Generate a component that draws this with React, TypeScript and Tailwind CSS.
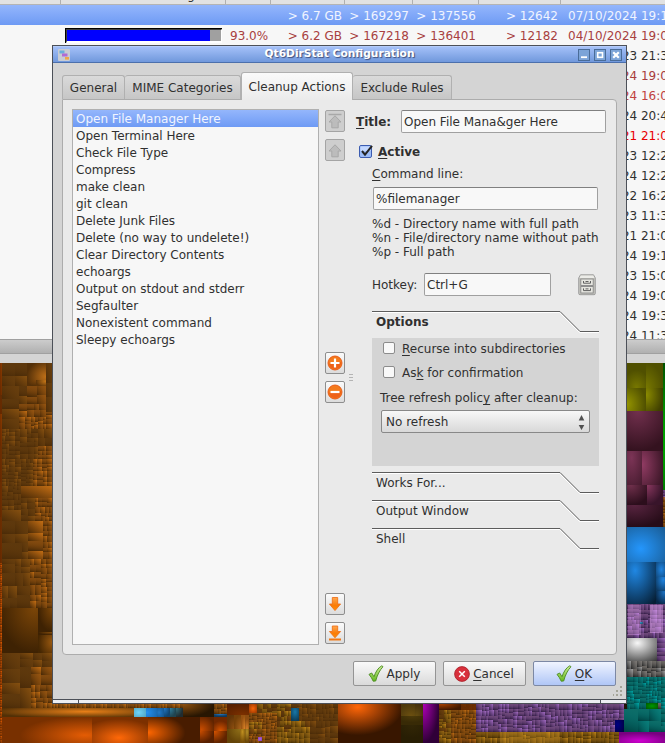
import React from "react";

type Kind = "brown" | "umber" | "rust" | "orange" | "violet" | "gray" | "teal" | "gold";

const palette: Record<Kind, [string, string]> = {
  brown: ["#c46e14", "#4a2a06"],
  umber: ["#865010", "#4c2c08"],
  rust: ["#8a3a00", "#642800"],
  orange: ["#f06000", "#582400"],
  violet: ["#a46cc4", "#341e46"],
  gray: ["#a0a0a0", "#282828"],
  teal: ["#00a8a8", "#004444"],
  gold: ["#c08418", "#483004"],
};

const kinds = Object.keys(palette) as Kind[];

function makeRandom(seed: number) {
  let s = seed;
  return () => {
    s = (s * 1103515245 + 12345) % 2147483648;
    return s / 2147483648;
  };
}

// x, y, width, height, colour, smallest cell
type Block = [number, number, number, number, Kind, number];

const mosaics: Block[] = [
  [2, 363, 25, 23, "umber", 9], [2, 386, 17, 43, "umber", 11], [19, 386, 8, 18, "umber", 8], [46, 363, 6, 49, "umber", 14],
  [27, 386, 19, 18, "brown", 7], [19, 404, 27, 13, "brown", 5], [19, 417, 27, 12, "brown", 4], [46, 412, 6, 17, "brown", 4],
  [2, 429, 18, 30, "umber", 4], [20, 429, 18, 30, "umber", 5], [38, 429, 14, 17, "umber", 7], [38, 446, 14, 13, "brown", 4],
  [2, 459, 19, 27, "umber", 4], [21, 459, 12, 27, "umber", 4], [33, 459, 19, 12, "brown", 4], [33, 471, 19, 15, "brown", 4],
  [2, 486, 19, 24, "umber", 4], [2, 510, 19, 11, "umber", 30], [21, 486, 31, 12, "brown", 40], [21, 498, 14, 23, "umber", 6], [35, 498, 17, 23, "brown", 4],
  [2, 521, 26, 22, "umber", 10], [28, 521, 15, 38, "brown", 9], [43, 521, 9, 38, "brown", 5], [2, 543, 20, 16, "umber", 30], [22, 543, 6, 16, "umber", 7],
  [2, 559, 28, 49, "umber", 8], [30, 559, 11, 49, "brown", 6], [41, 559, 11, 49, "brown", 4],
  [2, 653, 18, 55, "umber", 14], [20, 653, 32, 14, "umber", 8], [20, 667, 11, 41, "umber", 14], [31, 667, 21, 18, "brown", 7], [31, 685, 21, 23, "brown", 5],
  [52, 704, 162, 4, "brown", 3], [214, 704, 13, 10, "brown", 3],
  [257, 704, 20, 11, "gold", 4], [277, 704, 14, 17, "gold", 4], [291, 704, 47, 17, "umber", 4],
  [249, 713, 28, 30, "brown", 3], [249, 722, 13, 12, "gold", 3], [277, 721, 33, 22, "gold", 4], [310, 721, 28, 22, "umber", 5],
  [461, 704, 15, 6, "rust", 3], [439, 710, 12, 33, "gold", 3], [451, 710, 25, 33, "brown", 3],
  [476, 704, 56, 28, "violet", 4], [532, 704, 40, 28, "violet", 4], [572, 704, 30, 28, "violet", 4], [602, 704, 22, 28, "violet", 4],
  [476, 732, 143, 11, "gold", 4],
  [627, 604, 38, 34, "violet", 4], [627, 661, 38, 16, "gray", 5], [657, 638, 8, 23, "violet", 5],
  [627, 677, 19, 32, "teal", 4], [646, 677, 15, 26, "teal", 3], [658, 703, 3, 6, "gray", 6], [661, 677, 4, 32, "teal", 4],
  [624, 709, 14, 23, "teal", 20], [638, 709, 23, 12, "teal", 8], [638, 721, 23, 11, "teal", 9], [661, 709, 4, 23, "teal", 5],
  [663, 490, 2, 10, "violet", 2], [663, 497, 2, 30, "brown", 3],
  [0, 363, 2, 200, "rust", 30], [0, 563, 2, 180, "orange", 2],
];

// x, y, width, height, highlight, shadow, highlight centre
type Tile = [number, number, number, number, string, string, number, number];

const tiles: Tile[] = [
  [2, 608, 36, 45, "#7c4608", "#3e2203", 0.9, 0], [38, 608, 14, 24, "#7c4608", "#3e2203", 1, 0], [38, 632, 14, 3, "#8a500c", "#3e2203", 1, 0], [38, 635, 14, 18, "#985810", "#442602", 1, 0.4],
  [27, 363, 19, 17, "#c07018", "#543008", 1, 0.8], [27, 380, 9, 6, "#80480c", "#543008", 1, 0], [36, 380, 10, 6, "#c87818", "#5c3408", 1, 0.2],
  [2, 708, 132, 9, "#e88018", "#523006", 0.63, 0.4],
  [134, 708, 12, 9, "#70d4f8", "#4494b0", 0.4, 0.5], [146, 708, 11, 9, "#2490f0", "#1868b0", 0.1, 0.5], [157, 708, 7, 9, "#2078c8", "#104c80", 0.3, 0.5],
  [164, 708, 6, 9, "#2078c8", "#104470", 0, 0], [170, 708, 6, 9, "#3080a0", "#204450", 0, 0], [176, 708, 7, 9, "#34707c", "#202c30", 0, 0],
  [183, 704, 31, 13, "#8e5010", "#281602", 0, 0], [214, 714, 13, 3, "#2478c8", "#103858", 0.5, 0],
  [2, 717, 90, 26, "#e45c04", "#783000", 0.92, 0.7], [92, 717, 56, 26, "#ff6808", "#7c3000", 0.48, 0.8], [148, 717, 52, 26, "#ff6600", "#481c00", 0, 0.6],
  [200, 717, 14, 14, "#c84c00", "#602400", 0.1, 0.9], [214, 717, 13, 14, "#d85400", "#702800", 0.5, 1], [200, 731, 14, 12, "#c84c00", "#582000", 0, 0], [214, 731, 13, 12, "#d85400", "#602400", 0, 0],
  [227, 704, 22, 11, "#7c3000", "#582000", 0.7, 1], [249, 704, 8, 9, "#f86408", "#903400", 0.5, 0.5],
  [227, 715, 7, 14, "#905010", "#603408", 1, 1], [234, 715, 7, 14, "#ac641c", "#744008", 1, 1], [241, 715, 4, 14, "#dc8428", "#945010", 1, 1], [245, 715, 4, 14, "#d88028", "#8c4c10", 0.5, 1],
  [227, 729, 13, 14, "#907018", "#644408", 1, 0], [240, 729, 5, 14, "#c09020", "#785008", 0.5, 0.2], [245, 729, 4, 14, "#b89028", "#6c4808", 0.5, 0.2],
  [291, 708, 8, 13, "#1878a8", "#0c3c58", 0.5, 0.3], [258, 737, 4, 4, "#b064e0", "#8040b0", 0.5, 0.5],
  [338, 704, 63, 39, "#ff6608", "#381600", 0.31, 0.08],
  [401, 704, 14, 12, "#6c5010", "#4c380c", 0.7, 1], [415, 704, 8, 12, "#644c10", "#44300c", 0.2, 1], [401, 716, 22, 9, "#4c3a0a", "#382a06", 0.5, 0], [401, 725, 22, 18, "#322606", "#281e04", 0.5, 0],
  [423, 704, 16, 39, "#b000b8", "#300038", 0, 0],
  [439, 704, 22, 6, "#a84000", "#401800", 0.1, 0],
  [615, 720, 9, 12, "#000080", "#000038", 0.3, 0.4],
  [619, 732, 46, 11, "#d000d0", "#780080", 0.45, 0.8],
  [627, 363, 19, 25, "#787800", "#505000", 0.5, 1], [646, 363, 17, 25, "#787800", "#505000", 0, 1], [627, 388, 19, 23, "#949400", "#505000", 0, 0.7], [646, 388, 17, 23, "#8c8c00", "#404000", 0, 0.3],
  [627, 411, 36, 40, "#72304e", "#34121f", 0.3, 0], [627, 451, 15, 34, "#7c3456", "#481c30", 0.3, 0.2], [642, 451, 21, 34, "#923c64", "#40182a", 0, 0.4],
  [627, 485, 20, 20, "#70304c", "#2c0e1c", 0.2, 0], [647, 485, 16, 20, "#8a3860", "#38142a", 0, 0], [627, 505, 36, 22, "#582440", "#260c18", 0.2, 0],
  [663, 363, 2, 127, "#00d000", "#004800", 0.5, 0.62],
  [627, 527, 38, 35, "#2496fc", "#185486", 0.36, 0.62], [627, 562, 29, 42, "#2088e4", "#061e34", 0.28, 0.2],
  [656, 562, 9, 15, "#2084e0", "#0c3860", 0.6, 0.5], [656, 577, 9, 14, "#2084e0", "#0c3860", 0.8, 0.2], [656, 591, 9, 13, "#1c70c0", "#082848", 0.9, 0.1],
  [627, 638, 30, 23, "#f8f8f8", "#383838", 0.35, 0.22],
  [646, 703, 12, 6, "#009800", "#005400", 0.5, 0.5], [640, 622, 3, 2, "#40a0e0", "#206080", 0, 0],
];

// Soft light falling on whole directories: x, y, width, height, colour, opacity
const glows: [number, number, number, number, string, number][] = [
  [628, 605, 13, 30, "#f0b0ff", 0.35],
  [650, 605, 13, 28, "#f0b0ff", 0.45],
  [500, 732, 60, 11, "#f0b030", 0.25],
];

function split(block: Block, random: () => number, out: Block[]) {
  const [x, y, w, h, kind, min] = block;
  const wide = w >= h;
  const side = wide ? w : h;
  if (side < min * 1.7 || side < 4) {
    out.push(block);
    return;
  }
  const cut = Math.max(2, Math.min(side - 2, Math.round(side * (0.38 + random() * 0.24))));
  if (wide) {
    split([x, y, cut, h, kind, min], random, out);
    split([x + cut, y, w - cut, h, kind, min], random, out);
  } else {
    split([x, y, w, cut, kind, min], random, out);
    split([x, y + cut, w, h - cut, kind, min], random, out);
  }
}

function TreeMap() {
  const random = makeRandom(77);
  const cells: Block[] = [];
  mosaics.forEach((b) => split(b, random, cells));
  return (
    <svg className="block shrink-0" width="665" height="380" viewBox="0 363 665 380" shapeRendering="crispEdges">
      <defs>
        {kinds.map((k) => (
          <React.Fragment key={k}>
            <linearGradient id={`${k}0`} x1="1" y1="0" x2="0" y2="1">
              <stop offset="0" stopColor={palette[k][0]} />
              <stop offset="1" stopColor={palette[k][1]} />
            </linearGradient>
            <linearGradient id={`${k}1`} x1="1" y1="0.2" x2="0" y2="0.9">
              <stop offset="0" stopColor={palette[k][0]} stopOpacity="0.7" />
              <stop offset="1" stopColor={palette[k][1]} />
            </linearGradient>
            <linearGradient id={`${k}2`} x1="0.6" y1="0" x2="0.4" y2="1">
              <stop offset="0" stopColor={palette[k][0]} stopOpacity="0.6" />
              <stop offset="1" stopColor={palette[k][1]} />
            </linearGradient>
          </React.Fragment>
        ))}
        {tiles.map((t, i) => (
          <radialGradient key={i} id={`tile${i}`} cx={t[6]} cy={t[7]} r={t[6] === 0.5 || t[2] > 40 ? 0.72 : 1}>
            <stop offset="0" stopColor={t[4]} />
            <stop offset="1" stopColor={t[5]} />
          </radialGradient>
        ))}
      </defs>
      <rect x="0" y="363" width="665" height="380" fill="#201408" />
      {cells.map(([x, y, w, h, kind], i) => {
        const hue = kind === "gold" && y < 732 && random() < 0.4 ? "umber" : kind;
        return <rect key={i} x={x} y={y} width={w} height={h} fill={`url(#${hue}${Math.floor(random() * 3)})`} />;
      })}
      {glows.map(([x, y, w, h, color, opacity], i) => (
        <rect key={i} x={x} y={y} width={w} height={h} fill={color} opacity={opacity} />
      ))}
      {tiles.map(([x, y, w, h], i) => (
        <rect key={i} x={x} y={y} width={w} height={h} fill={`url(#tile${i})`} />
      ))}
    </svg>
  );
}

const dates: [string, string][] = [
  ["10/03/2023 21:3", "text-[#303030]"],
  ["04/10/2024 19:0", "text-[#a83c3c]"],
  ["04/10/2024 16:0", "text-[#c04040]"],
  ["11/06/2024 20:4", "text-[#303030]"],
  ["12/05/2021 21:0", "text-[#e80000]"],
  ["18/02/2023 12:2", "text-[#303030]"],
  ["22/08/2024 12:2", "text-[#303030]"],
  ["09/11/2022 16:2", "text-[#303030]"],
  ["14/07/2023 11:3", "text-[#303030]"],
  ["12/05/2021 21:0", "text-[#303030]"],
  ["07/10/2024 19:1", "text-[#303030]"],
  ["03/09/2023 15:0", "text-[#303030]"],
  ["04/10/2024 19:0", "text-[#303030]"],
  ["06/10/2024 19:3", "text-[#303030]"],
  ["02/10/2024 11:3", "text-[#303030]"],
];

function Numbers({ values }: { values: string[] }) {
  return (
    <>
      <span className="w-[72px] shrink-0 text-right">{values[0]}</span>
      <span className="w-[67px] shrink-0 text-right">{values[1]}</span>
      <span className="w-[67px] shrink-0 text-right">{values[2]}</span>
      <span className="w-[82px] shrink-0 text-right">{values[3]}</span>
      <span className="ml-[10px] shrink-0">{values[4]}</span>
    </>
  );
}

function MainWindow() {
  return (
    <div className="flex h-[743px] w-[665px] flex-col overflow-hidden">
      <div className="flex h-[5px] shrink-0 border-b border-[#b4b4b4] bg-[#e2e2e2]">
        <div className="w-[61px] border-r border-[#b0b0b0]" />
        <div className="flex w-[165px] justify-center overflow-hidden border-r border-[#b0b0b0]">
          <span className="-mt-[13px] h-4 leading-4">Subtree Percentage</span>
        </div>
        <div className="w-[45px] border-r border-[#b0b0b0]" />
        <div className="w-[74px] border-r border-[#b0b0b0]" />
        <div className="w-[68px] border-r border-[#b0b0b0]" />
        <div className="w-[66px] border-r border-[#b0b0b0]" />
        <div className="w-[82px] border-r border-[#b0b0b0]" />
      </div>
      <div className="flex h-[334px] shrink-0 flex-col overflow-hidden bg-[#f7f7f7]">
        <div className="flex h-5 shrink-0 items-center bg-linear-to-b from-[#94b6fc] to-[#6e9af4] pt-[2px] pl-[270px] text-[#f0f4ff]">
          <Numbers values={["> 6.7 GB", "> 169297", "> 137556", "> 12642", "07/10/2024 19:1"]} />
        </div>
        <div className="flex h-5 shrink-0 items-center pt-[2px] pl-[65px] text-[#a84040]">
          <div className="-mt-[2px] h-[15px] w-[157px] shrink-0 border-t border-l border-black">
            <div className="flex h-[14px] w-[156px] border-t border-r border-b-2 border-l border-t-[#404040] border-r-white border-b-white border-l-[#404040] bg-[#a0a0a0]">
              <div className="w-[143px] bg-[#0000ff]" />
            </div>
          </div>
          <span className="ml-2 w-10 shrink-0">93.0%</span>
          <Numbers values={["> 6.2 GB", "> 167218", "> 136401", "> 12182", "04/10/2024 19:0"]} />
        </div>
        {dates.map(([text, color], i) => (
          <div key={i} className={`flex h-5 shrink-0 items-center pt-[2px] pl-[568px] ${color}`}>{text}</div>
        ))}
      </div>
      <div className="h-[15px] shrink-0 border-y border-[#a0a0a0] bg-linear-to-b from-[#cccccc] to-[#b0b0b0]" />
      <div className="h-[9px] shrink-0 bg-[#d4d4d4]" />
      <TreeMap />
    </div>
  );
}

const cleanups = [
  "Open File Manager Here", "Open Terminal Here", "Check File Type", "Compress", "make clean", "git clean", "Delete Junk Files",
  "Delete (no way to undelete!)", "Clear Directory Contents", "echoargs", "Output on stdout and stderr", "Segfaulter",
  "Nonexistent command", "Sleepy echoargs",
];

function ToolButton({ children, off, className = "" }: { children: React.ReactNode; off?: boolean; className?: string }) {
  return (
    <button
      className={`flex h-[22px] w-5 shrink-0 items-center justify-center rounded-[2px] border ${off ? "border-[#a4a4a4] bg-[#cecece]" : "border-[#8e8e8e] bg-linear-to-b from-[#fbfbfb] to-[#dcdcdc]"} ${className}`}
    >
      {children}
    </button>
  );
}

function Arrow({ up, bar }: { up?: boolean; bar?: boolean }) {
  return (
    <svg width="16" height="18" viewBox="0 0 16 18">
      <defs>
        <linearGradient id="arrowOrange" x1="0" y1="0" x2="0" y2="1">
          <stop offset="0" stopColor="#ffa850" />
          <stop offset="0.6" stopColor="#fa7c08" />
          <stop offset="1" stopColor="#ff8c00" />
        </linearGradient>
      </defs>
      {up ? (
        <g fill="#bcbcbc" stroke="#a8a8a8">
          {bar && <path d="M1.5 2.5H14.5" strokeWidth="1.5" />}
          <path d="M8 3.8L14 10H11.2V15.8H4.8V10H2Z" />
        </g>
      ) : (
        <g fill="url(#arrowOrange)" stroke="#ee6a10" strokeWidth="0.8">
          <path d={bar ? "M5.3 2H10.7V7.5H13.6L8 13.8L2.4 7.5H5.3Z" : "M5.3 2.5H10.7V9H13.6L8 15.6L2.4 9H5.3Z"} />
          {bar && <path d="M2 15.5H14" stroke="#f37814" strokeWidth="2" />}
        </g>
      )}
    </svg>
  );
}

function Round({ plus }: { plus?: boolean }) {
  return (
    <svg width="16" height="16" viewBox="0 0 16 16" className="shrink-0">
      <circle cx="8" cy="8" r="7" fill="#f47a1c" stroke="#e85510" strokeWidth="0.9" />
      <path d="M2 9A6 6 0 0 0 14 7Z" fill="#ee6118" />
      <path d={plus ? "M3.5 8H12.5M8 3.5V12.5" : "M3.5 8H12.5"} stroke="#fff" strokeWidth="2.2" />
    </svg>
  );
}

function Check() {
  return (
    <svg width="16" height="17" viewBox="0 0 16 17">
      <defs>
        <linearGradient id="tickGreen" x1="0" y1="0" x2="0" y2="1">
          <stop offset="0" stopColor="#d2f09c" />
          <stop offset="1" stopColor="#62b81c" />
        </linearGradient>
      </defs>
      <path d="M1 9.4L3.7 8L6 11.7C7.5 7 10.2 2.6 13.8 0.8L15 1.7C11.8 5 9 10.5 7.7 16L5.2 16.2C4 13.5 2.7 11.3 1 9.4Z" fill="url(#tickGreen)" stroke="#4a8a20" strokeWidth="0.9" />
    </svg>
  );
}

function CancelIcon() {
  return (
    <svg width="16" height="16" viewBox="0 0 16 16">
      <circle cx="8" cy="8" r="7.4" fill="#d8303c" stroke="#a81c24" strokeWidth="0.8" />
      <path d="M5.2 5.2L10.8 10.8M10.8 5.2L5.2 10.8" stroke="#fff" strokeWidth="1.5" />
    </svg>
  );
}

function CabinetIcon() {
  return (
    <svg width="18" height="22" viewBox="0 0 18 22">
      <path d="M2.5 0.8H15.5L17.3 4V19.5Q17.3 20.7 16 20.7H2Q0.7 20.7 0.7 19.5V4Z" fill="#c4c4be" stroke="#999" strokeWidth="0.9" />
      <path d="M2.7 1.5H15.3L16.5 4H1.5Z" fill="#ecece8" />
      <rect x="2.8" y="5" width="12.4" height="6.5" fill="#e6e6e0" stroke="#888" strokeWidth="0.9" />
      <rect x="2.8" y="12.5" width="12.4" height="6.5" fill="#e6e6e0" stroke="#888" strokeWidth="0.9" />
      <path d="M5.5 7V9.2H12.5V7M5.5 14.4V16.6H12.5V14.4M7.5 7.5H10.5M7.5 14.9H10.5" fill="none" stroke="#606060" />
    </svg>
  );
}

function CheckBox({ on }: { on?: boolean }) {
  if (!on) return <span className="-mt-[2px] h-3 w-3 shrink-0 rounded-[2px] border border-[#8c8c8c] bg-[#f9f9f9]" />;
  return (
    <svg width="14" height="14" viewBox="0 0 14 14" className="shrink-0">
      <rect x="0.5" y="1.5" width="12" height="12" rx="1.5" fill="#9cbcf8" stroke="#3c5cb0" />
      <path d="M1.5 2.5H11.5V7H1.5Z" fill="#c4d8ff" />
      <path d="M3 7L6 10.6L13 1.8" fill="none" stroke="#242424" strokeWidth="2" />
    </svg>
  );
}

function U({ children }: { children: string }) {
  return <span className="underline decoration-1 underline-offset-2">{children}</span>;
}

function Field({ text, className }: { text: string; className: string }) {
  return (
    <div className={`flex h-[23px] items-center rounded-[2px] border border-[#a0a0a0] border-t-[#808080] bg-[#f8f8f8] pl-[2px] ${className}`}>{text}</div>
  );
}

function Section({ label, bold, className }: { label: string; bold?: boolean; className: string }) {
  return (
    <div className={`relative h-[22px] w-[227px] shrink-0 pl-1 leading-[22px] ${bold ? "font-bold" : ""} ${className}`}>
      <svg className="absolute top-0 left-0" width="227" height="23" viewBox="0 0 227 23" fill="none">
        <path d="M0 1.5H187.5L207.5 21.5H227" stroke="#fff" />
        <path d="M0 0.5H188L208 20.5H227" stroke="#5c5c5c" />
      </svg>
      {label}
    </div>
  );
}

function Tab({ text, width }: { text: string; width: string }) {
  return (
    <div className={`flex h-6 items-center justify-center rounded-t-[3px] border border-b-0 border-[#b0b0b0] bg-linear-to-b from-[#dadada] to-[#c6c6c6] ${width}`}>{text}</div>
  );
}

function DialogButton({ children, primary }: { children: React.ReactNode; primary?: boolean }) {
  return (
    <button
      className={`flex h-[25px] w-[83px] shrink-0 items-center justify-center gap-[3px] rounded-[2px] border bg-linear-to-b pr-px ${primary ? "border-[#7c88a4] from-[#f0f4ff] to-[#b0c6f6]" : "border-[#949494] from-[#fafafa] to-[#dadada]"}`}
    >
      {children}
    </button>
  );
}

function WindowButton({ kind }: { kind: "min" | "max" | "close" }) {
  return (
    <svg width="12" height="12" viewBox="0 0 12 12">
      <rect x="0.5" y="0.5" width="11" height="11" fill="#7ca4d8" stroke="#4a6c98" />
      {kind === "min" && <path d="M3 8.2H9" stroke="#fff" strokeWidth="1.8" />}
      {kind === "max" && <rect x="3.7" y="3.7" width="4.8" height="4.6" fill="none" stroke="#fff" strokeWidth="1.6" />}
      {kind === "close" && <path d="M3.2 3.2L8.8 8.8M8.8 3.2L3.2 8.8" stroke="#fff" strokeWidth="2.2" />}
    </svg>
  );
}

function ActionForm() {
  return (
    <div className="flex w-[250px] flex-col">
      <div className="mt-px flex items-center">
        <span className="w-[45px] font-bold"><U>T</U>itle:</span>
        <Field text="Open File Mana&amp;ger Here" className="w-[205px]" />
      </div>
      <div className="mt-[11px] flex h-[14px] items-center pl-[3px] font-bold">
        <CheckBox on />
        <span className="mt-px ml-[5px]"><U>A</U>ctive</span>
      </div>
      <div className="mt-[9px] ml-4 h-[15px] leading-[15px]"><U>C</U>ommand line:</div>
      <Field text="%filemanager" className="mt-[5px] ml-[17px] w-[225px]" />
      <div className="mt-[7px] ml-4 leading-[14px] whitespace-nowrap">
        <div>%d - Directory name with full path</div>
        <div>%n - File/directory name without path</div>
        <div>%p - Full path</div>
      </div>
      <div className="mt-[14px] ml-4 flex items-center">
        <span className="w-[52px]">Hotkey:</span>
        <Field text="Ctrl+G" className="w-[127px]" />
        <span className="ml-[27px]"><CabinetIcon /></span>
      </div>
      <Section label="Options" bold className="mt-[15px] ml-4" />
      <div className="mt-[5px] ml-4 flex h-32 w-[227px] flex-col bg-[#d4d4d4] pl-2">
        <div className="mt-[3px] flex h-4 items-center gap-[7px] pl-[3px]"><CheckBox /><span><U>R</U>ecurse into subdirectories</span></div>
        <div className="mt-2 flex h-4 items-center gap-[7px] pl-[3px]"><CheckBox /><span>As<U>k</U> for confirmation</span></div>
        <div className="mt-[9px] h-4 leading-4">Tree refresh polic<U>y</U> after cleanup:</div>
        <div className="mt-1 ml-px flex h-[23px] w-[209px] items-center justify-between rounded-[2px] border border-[#888] bg-linear-to-b from-[#f8f8f8] to-[#d8d8d8] pr-1 pl-1">
          <span>No refresh</span>
          <svg width="7" height="17" viewBox="0 0 7 17"><path d="M3.5 2L6.3 7.5H0.7ZM3.5 17L0.7 12H6.3Z" fill="#505050" /></svg>
        </div>
      </div>
      <Section label="Works For..." className="mt-[6px] ml-4" />
      <Section label="Output Window" className="mt-[6px] ml-4" />
      <Section label="Shell" className="mt-[6px] ml-4" />
    </div>
  );
}

function Dialog() {
  return (
    <div className="absolute top-[45px] left-[52px] flex h-[659px] w-[575px] flex-col border border-[#4c5058] bg-[#d4d4d4]">
      <div className="flex h-[17px] shrink-0 items-center border-t border-b border-t-[#b4ccfa] border-b-[#4c70ac] bg-linear-to-b from-[#a4c0f8] to-[#7098dc] pr-1 pl-[5px]">
        <svg width="12" height="12" viewBox="0 0 12 12">
          <rect width="12" height="12" rx="1" fill="#c8ccd4" />
          <rect x="1.5" y="1.5" width="5" height="3" fill="#68b0dc" />
          <rect x="4" y="4.5" width="5.5" height="3" fill="#b06cd4" />
          <rect x="7" y="8" width="4" height="2.6" fill="#f0a848" />
        </svg>
        <div className="-mt-px flex-1 pl-[31px] text-center text-[10.67px] font-bold text-white [text-shadow:1px_1px_1px_#40507c]">Qt6DirStat Configuration</div>
        <div className="flex gap-1"><WindowButton kind="min" /><WindowButton kind="max" /><WindowButton kind="close" /></div>
      </div>
      <div className="flex h-[636px] shrink-0 flex-col pl-[9px]">
        <div className="z-10 -mb-px flex h-[37px] shrink-0 items-end">
          <div className="mb-px flex"><Tab text="General" width="w-[63px]" /><Tab text="MIME Categories" width="w-[116px] border-l-0" /></div>
          <div className="flex h-7 w-[112px] items-center justify-center rounded-t-[3px] border border-b-0 border-[#b0b0b0] bg-linear-to-b from-[#fafafa] to-[#ebebeb]">Cleanup Actions</div>
          <div className="mb-px"><Tab text="Exclude Rules" width="w-[99px] border-l-0" /></div>
        </div>
        <div className="flex h-[556px] w-[555px] shrink-0 rounded-[4px] rounded-tl-none border border-[#acacac] bg-[#eaeaea] pt-[9px] pl-[9px]">
          <div className="h-[536px] w-[247px] shrink-0 border border-[#b0b0b0] bg-[#f7f7f7]">
            {cleanups.map((name, i) => (
              <div key={name} className={`h-[17px] pl-[3px] leading-[19px] ${i === 0 ? "bg-linear-to-b from-[#94b6fc] to-[#6e9af4] text-[#f0f4ff]" : ""}`}>{name}</div>
            ))}
          </div>
          <div className="ml-[6px] flex h-[536px] w-5 shrink-0 flex-col pt-px">
            <ToolButton off><Arrow up bar /></ToolButton>
            <ToolButton off className="mt-[7px]"><Arrow up /></ToolButton>
            <ToolButton className="mt-[191px]"><Round plus /></ToolButton>
            <ToolButton className="mt-[7px]"><Round /></ToolButton>
            <ToolButton className="mt-[190px]"><Arrow /></ToolButton>
            <ToolButton className="mt-[7px]"><Arrow bar /></ToolButton>
          </div>
          <div className="flex w-[11px] shrink-0 flex-col gap-[2px] pt-[265px] pl-1">
            <span className="h-px w-1 bg-[#b4b4b4]" /><span className="h-px w-1 bg-[#b4b4b4]" /><span className="h-px w-1 bg-[#b4b4b4]" />
          </div>
          <ActionForm />
        </div>
        <div className="mt-[6px] flex gap-[7px] pl-[291px]">
          <DialogButton><Check />Apply</DialogButton>
          <DialogButton><CancelIcon /><span><U>C</U>ancel</span></DialogButton>
          <DialogButton primary><Check /><span><U>O</U>K</span></DialogButton>
        </div>
        <svg className="ml-[551px] shrink-0" width="10" height="10" viewBox="0 0 10 10" fill="#a4a498">
          <path d="M7 0h2v2H7zM7 4h2v2H7zM7 8h2v2H7zM3 4h2v2H3zM3 8h2v2H3zM-1 8h2v2H-1z" />
        </svg>
      </div>
      <div className="flex h-1 shrink-0 border-t border-[#4c5058] bg-[#eceef2]">
        <span className="w-[26px] border-r border-[#4c5058]" />
        <span className="w-[522px] border-r border-[#4c5058]" />
      </div>
    </div>
  );
}

export default function App() {
  return (
    <div className="relative h-[743px] w-[665px] overflow-hidden font-['DejaVu_Sans',sans-serif] text-[12px] leading-normal whitespace-nowrap text-[#303030]">
      <MainWindow />
      <Dialog />
    </div>
  );
}
